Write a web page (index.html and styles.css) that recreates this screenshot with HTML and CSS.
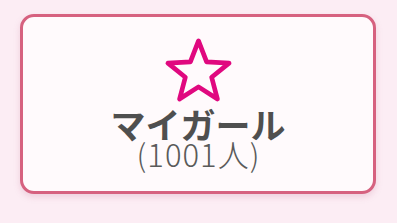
FILE: index.html
```html
<!DOCTYPE html>
<html lang="ja">
<head>
<meta charset="utf-8">
<link rel="stylesheet" href="styles.css">
</head>
<body>
<div class="page">
  <div class="card">
    <svg class="star" width="77" height="73" viewBox="0 0 72 68">
      <polygon points="36,3.5 43.6,23.1 64.6,24.3 48.3,37.5 53.7,57.9 36,46.5 18.3,57.9 23.7,37.5 7.4,24.3 28.4,23.1" fill="none" stroke="#e0087f" stroke-width="4.4" stroke-linejoin="round"/>
    </svg>
    <div class="title">マイガール</div>
    <div class="count">(1001人)</div>
  </div>
</div>
</body>
</html>
```
FILE: styles.css
```css
html, body {
  margin: 0;
  padding: 0;
  background: #fcedf4;
}
.page {
  width: 397px;
  height: 223px;
  box-sizing: border-box;
  padding: 14px 21px 29px 20px;
  display: flex;
}
.card {
  flex: 1;
  border: 3px solid #d6617f;
  border-radius: 14px;
  background: #fffafc;
  box-shadow: 0 3px 6px rgba(200, 120, 150, 0.25);
  display: flex;
  flex-direction: column;
  align-items: center;
  padding-top: 20px;
  font-family: "Noto Sans CJK JP", "Noto Sans", sans-serif;
}
.star {
  display: block;
}
.title {
  font-size: 35px;
  font-weight: 700;
  color: #4f4f4f;
  line-height: 30px;
  margin-top: -1px;
}
.count {
  font-size: 31px;
  font-weight: 300;
  color: #5a5a5a;
  line-height: 30px;
  letter-spacing: 1px;
  padding-left: 1px;
}
```
